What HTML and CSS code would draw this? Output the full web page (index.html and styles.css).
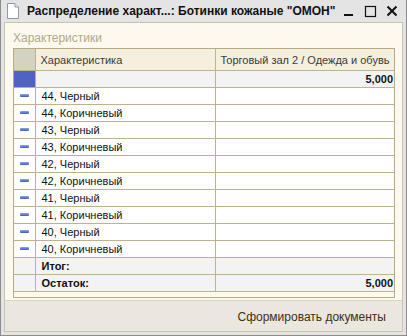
FILE: index.html
```html
<!DOCTYPE html>
<html lang="ru">
<head>
<meta charset="utf-8">
<link rel="stylesheet" href="styles.css">
</head>
<body>
<div class="window">
  <div class="titlebar">
    <svg class="doc-icon" width="14" height="16" viewBox="0 0 14 16">
      <path d="M1.5 0.5 H9 L12.5 4 V15.5 H1.5 Z" fill="#fff" stroke="#8a9bb0"/>
      <path d="M9 0.5 V4 H12.5" fill="#e8eef5" stroke="#8a9bb0"/>
    </svg>
    <div class="title">Распределение характ...: Ботинки кожаные "ОМОН"</div>
    <div class="controls">
      <svg width="12" height="12" viewBox="0 0 12 12"><rect x="1" y="9" width="9" height="2" fill="#111"/></svg>
      <svg width="13" height="13" viewBox="0 0 13 13"><rect x="1.5" y="1.5" width="10" height="10" fill="none" stroke="#111" stroke-width="1.2"/></svg>
      <svg width="12" height="12" viewBox="0 0 12 12"><path d="M1.5 1.5 L10.5 10.5 M10.5 1.5 L1.5 10.5" stroke="#111" stroke-width="2"/></svg>
    </div>
  </div>
  <div class="content">
    <div class="group-label">Характеристики</div>
    <div class="grid-wrap">
      <table class="grid">
        <colgroup><col class="c-mark"><col class="c-name"><col class="c-qty"></colgroup>
        <thead>
          <tr class="head"><th class="mark-h"></th><th>Характеристика</th><th>Торговый зал 2 / Одежда и обувь</th></tr>
        </thead>
        <tbody>
          <tr class="total top"><td class="mark-sel"></td><td></td><td class="num">5,000</td></tr>
          <tr><td class="mark"><span class="minus"></span></td><td>44, Черный</td><td></td></tr>
          <tr><td class="mark"><span class="minus"></span></td><td>44, Коричневый</td><td></td></tr>
          <tr><td class="mark"><span class="minus"></span></td><td>43, Черный</td><td></td></tr>
          <tr><td class="mark"><span class="minus"></span></td><td>43, Коричневый</td><td></td></tr>
          <tr><td class="mark"><span class="minus"></span></td><td>42, Черный</td><td></td></tr>
          <tr><td class="mark"><span class="minus"></span></td><td>42, Коричневый</td><td></td></tr>
          <tr><td class="mark"><span class="minus"></span></td><td>41, Черный</td><td></td></tr>
          <tr><td class="mark"><span class="minus"></span></td><td>41, Коричневый</td><td></td></tr>
          <tr><td class="mark"><span class="minus"></span></td><td>40, Черный</td><td></td></tr>
          <tr><td class="mark"><span class="minus"></span></td><td>40, Коричневый</td><td></td></tr>
          <tr class="total"><td></td><td class="lbl">Итог:</td><td></td></tr>
          <tr class="total"><td></td><td class="lbl">Остаток:</td><td class="num">5,000</td></tr>
        </tbody>
      </table>
      <div class="grid-foot"></div>
    </div>
  </div>
  <div class="footer">
    <span class="btn">Сформировать документы</span>
  </div>
</div>
</body>
</html>
```

FILE: styles.css
```css
html, body {
  margin: 0;
  padding: 0;
  background: #ffffff;
}
body {
  width: 407px;
  height: 336px;
  font-family: "Liberation Sans", Arial, sans-serif;
}
.window {
  box-sizing: border-box;
  width: 407px;
  height: 336px;
  background: #e4e4e4;
  border: 1px solid #8c8c8c;
  border-top: none;
  display: flex;
  flex-direction: column;
  padding: 0 3px 3px 3px;
}
.titlebar {
  height: 22px;
  display: flex;
  align-items: center;
  flex: none;
}
.doc-icon {
  margin-left: 2px;
  margin-right: 7px;
  flex: none;
}
.title {
  font-size: 12px;
  font-weight: bold;
  color: #111;
  white-space: nowrap;
  flex: 1;
}
.controls {
  display: flex;
  align-items: center;
  gap: 9px;
  margin-right: 5px;
}
.content {
  background: #fdf9ee;
  border: 1px solid #c9c4b2;
  border-bottom: none;
  flex: none;
  height: 277px;
  padding: 0 8px 0 8px;
}
.group-label {
  font-size: 12px;
  color: #b2a88a;
  height: 25px;
  line-height: 31px;
}
.grid-wrap {
  width: 382px;
  border: 1px solid #b7ab85;
  box-sizing: border-box;
}
.grid {
  width: 100%;
  border-collapse: collapse;
  table-layout: fixed;
  font-size: 11px;
  color: #111;
}
.c-mark { width: 21px; }
.c-name { width: 180px; }
.grid th, .grid td {
  border: 1px solid #bfb38d;
  height: 16px;
  padding: 0 4px;
  white-space: nowrap;
  overflow: hidden;
  text-align: left;
  font-weight: normal;
}
.grid tr:first-child th { border-top: none; }
.grid th:first-child, .grid td:first-child { border-left: none; padding: 0; }
.grid th:last-child, .grid td:last-child { border-right: none; }
.grid tbody tr:last-child td { border-bottom: none; }
.head th {
  height: 21px;
  background: #f4f0dd;
  color: #3a3a3a;
  padding-left: 5px;
}
.grid .head th.mark-h { background: #d6d2c1; }
.grid td { background: #ffffff; padding-left: 6px; }
.grid .total td { background: #f3f3f3; }
.grid .total td.mark-sel { background: #4f63c3; }
.grid td.num { text-align: right; font-weight: bold; padding-right: 1px; }
.grid td.lbl { font-weight: bold; }
.grid td.mark { text-align: center; line-height: 0; }
.minus {
  display: inline-block;
  width: 9px;
  height: 3px;
  border-radius: 1px;
  background: linear-gradient(#8ea4e6, #3d5bc2);
  vertical-align: middle;
  margin-top: -2px;
}
.grid-foot {
  height: 5px;
  border-top: 1px solid #bfb38d;
  background: #fdf9ee;
}
.footer {
  flex: 1;
  background: #ebe7de;
  border: 1px solid #c9c4b2;
  border-top: 1px solid #d8d3c4;
  display: flex;
  align-items: center;
  justify-content: flex-end;
  padding-right: 16px;
  padding-top: 2px;
}
.btn {
  font-size: 12px;
  color: #3b2f14;
}
```
